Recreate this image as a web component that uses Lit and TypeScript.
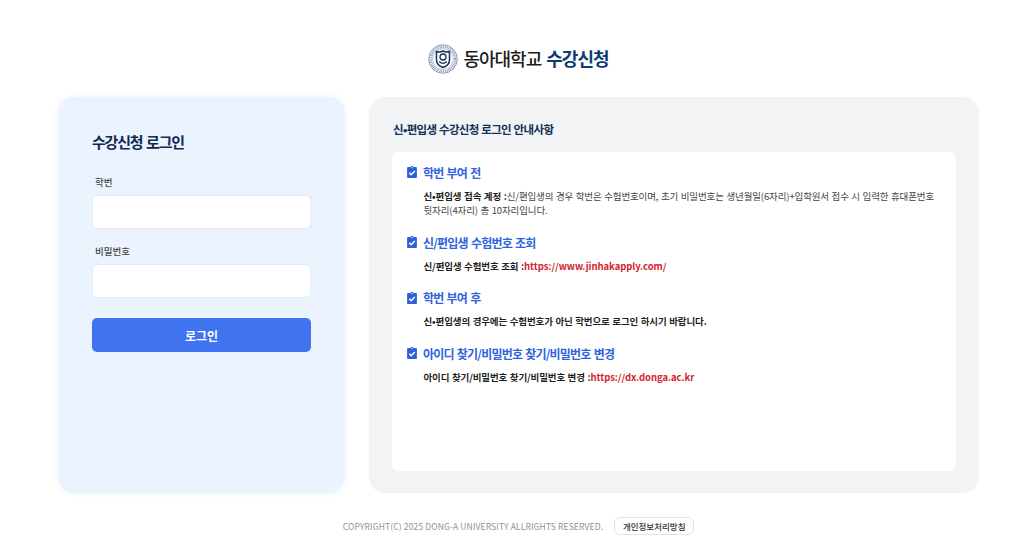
import { LitElement, html, css } from "lit";
import { customElement } from "lit/decorators.js";

const check = html`<svg class="chk" viewBox="3 1 18 22" aria-hidden="true"><path fill="#2f5fd8" d="M19 3h-4.200C14.400 1.800 13.300 1 12 1s-2.400.8-2.800 2H5c-1.100 0-2 .9-2 2v16c0 1.100.9 2 2 2h14c1.100 0 2-.9 2-2V5c0-1.100-.9-2-2-2z"/><path fill="none" stroke="#fff" stroke-width="2.600" d="M7 13.500l3.400 3.400L17.200 10"/><circle cx="12" cy="4" r="1" fill="#fff"/></svg>`;

const logo = html`<svg class="logo" viewBox="0 0 60 60" aria-hidden="true">
  <circle cx="30" cy="30" r="28.500" fill="#fff" stroke="#5a7190" stroke-width="1.400"/>
  <circle cx="30" cy="30" r="24.500" fill="none" stroke="#8fa0b5" stroke-width="5" stroke-dasharray="2 1.600"/>
  <circle cx="30" cy="30" r="20.800" fill="#fff" stroke="#5a7190" stroke-width="0.800"/>
  <path d="M17 15c4.500 1.500 9 1.500 13-1 4 2.500 8.500 2.500 13 1v17c0 8-6.500 12.500-13 15-6.500-2.500-13-7-13-15z" fill="#fff" stroke="#16315a" stroke-width="3"/>
  <circle cx="30" cy="26" r="6" fill="none" stroke="#16315a" stroke-width="2.600"/>
  <path d="M22.500 35c4.500 4.500 10.500 4.500 15 0" fill="none" stroke="#16315a" stroke-width="2.600"/>
</svg>`;

@customElement("app-root")
export class AppRoot extends LitElement {
  static styles = css`
    :host {
      display: block;
      width: 1024px;
      height: 557px;
      overflow: hidden;
      background: #fff;
      font-family: "Noto Sans CJK KR", "Noto Sans", sans-serif;
      color: #222;
    }
    .page { display: flex; flex-direction: column; height: 557px; }
    .top {
      height: 97px;
      padding-bottom: 22px;
      box-sizing: border-box;
      display: flex;
      align-items: flex-end;
      justify-content: center;
      gap: 5px;
      padding-left: 13px;
    }
    .logo { width: 30px; height: 30px; flex: none; margin-bottom: 1px; }
    .brand {
      font-size: 18px;
      line-height: 34px;
      font-weight: 500;
      letter-spacing: -1px;
      word-spacing: 2px;
      color: #1c1c1c;
      white-space: nowrap;
    }
    .brand b { color: #0c3a72; font-weight: 700; }
    .main {
      display: grid;
      grid-template-columns: 287px 610px;
      gap: 24px;
      padding-left: 58px;
      height: 396px;
    }
    .login {
      background: #ebf3fe;
      border-radius: 16px;
      box-shadow: 0 0 6px rgba(90, 130, 220, 0.1);
      padding: 34px 34px 0;
      box-sizing: border-box;
    }
    .login h2 {
      margin: 0 0 22px;
      font-size: 15px;
      line-height: 22px;
      font-weight: 700;
      letter-spacing: -1.200px;
      word-spacing: 1.500px;
      color: #10294d;
    }
    .login label {
      display: block;
      margin: 0 0 6px 3px;
      font-size: 9.500px;
      line-height: 14px;
      color: #444;
      font-weight: 500;
    }
    .field {
      height: 34px;
      box-sizing: border-box;
      width: 219px;
      background: #fff;
      border: 1px solid #e4ebf5;
      border-radius: 5px;
      margin-bottom: 15px;
      display: block;
      padding: 0 8px;
      font: inherit;
      outline: none;
    }
    .btn {
      display: block;
      width: 219px;
      height: 34px;
      margin-top: 20px;
      border: 0;
      border-radius: 5px;
      background: #3f73f0;
      color: #fff;
      font: inherit;
      font-size: 12px;
      font-weight: 700;
    }
    .info {
      background: #f1f3f5;
      border-radius: 16px;
      padding: 22px 23px 22px 23px;
      box-sizing: border-box;
      display: flex;
      flex-direction: column;
    }
    .info h2 {
      margin: 0 0 13px 1px;
      font-size: 11.500px;
      line-height: 20px;
      font-weight: 700;
      letter-spacing: -0.650px;
      word-spacing: 0.600px;
      color: #143157;
    }
    .box {
      flex: 1;
      background: #fff;
      border-radius: 7px;
      padding: 10.500px 16px 0 15px;
    }
    .sec { margin-bottom: 15px; }
    .sec h3 {
      margin: 0 0 7px;
      display: flex;
      align-items: center;
      gap: 6px;
      font-size: 12px;
      line-height: 19px;
      font-weight: 700;
      letter-spacing: -0.800px;
      word-spacing: 1.200px;
      color: #2f63e0;
    }
    .chk { width: 10px; height: 12px; flex: none; }
    .sec p {
      margin: 0 0 0 16.500px;
      font-size: 9.500px;
      line-height: 14.500px;
      letter-spacing: -0.130px;
      word-spacing: 0.600px;
      color: #444;
    }
    .sec p strong { font-weight: 700; color: #1f1f1f; }
    .sec p a { color: #d3262c; font-weight: 700; text-decoration: none; letter-spacing: -0.050px; }
    .foot {
      flex: 1;
      display: flex;
      align-items: center;
      justify-content: center;
      gap: 11px;
      padding-top: 2px;
      box-sizing: border-box;
      padding-left: 13px;
    }
    .foot span { font-size: 8.500px; letter-spacing: 0.130px; color: #8d9299; white-space: nowrap; }
    .foot button {
      width: 80px;
      height: 18px;
      padding: 0;
      border: 1px solid #dfe3e8;
      border-radius: 6px;
      background: #fff;
      font: inherit;
      font-size: 8.500px;
      font-weight: 500;
      color: #333;
    }
  `;

  render() {
    return html`<div class="page">
      <header class="top">
        ${logo}
        <div class="brand">동아대학교 <b>수강신청</b></div>
      </header>
      <main class="main">
        <section class="login">
          <h2>수강신청 로그인</h2>
          <label>학번</label>
          <input class="field" />
          <label>비밀번호</label>
          <input class="field" type="password" />
          <button class="btn">로그인</button>
        </section>
        <section class="info">
          <h2>신•편입생 수강신청 로그인 안내사항</h2>
          <div class="box">
            <div class="sec">
              <h3>${check}학번 부여 전</h3>
              <p><strong>신•편입생 접속 계정 :</strong>신/편입생의 경우 학번은 수험번호이며, 초기 비밀번호는 생년월일(6자리)+입학원서 접수 시 입력한 휴대폰번호 뒷자리(4자리) 총 10자리입니다.</p>
            </div>
            <div class="sec">
              <h3>${check}신/편입생 수험번호 조회</h3>
              <p><strong>신/편입생 수험번호 조회 :</strong><a href="#">https://www.jinhakapply.com/</a></p>
            </div>
            <div class="sec">
              <h3>${check}학번 부여 후</h3>
              <p><strong>신•편입생의 경우에는 수험번호가 아닌 학번으로 로그인 하시기 바랍니다.</strong></p>
            </div>
            <div class="sec">
              <h3>${check}아이디 찾기/비밀번호 찾기/비밀번호 변경</h3>
              <p><strong>아이디 찾기/비밀번호 찾기/비밀번호 변경 :</strong><a href="#">https://dx.donga.ac.kr</a></p>
            </div>
          </div>
        </section>
      </main>
      <footer class="foot">
        <span>COPYRIGHT(C) 2025 DONG-A UNIVERSITY ALLRIGHTS RESERVED.</span>
        <button>개인정보처리방침</button>
      </footer>
    </div>`;
  }
}
